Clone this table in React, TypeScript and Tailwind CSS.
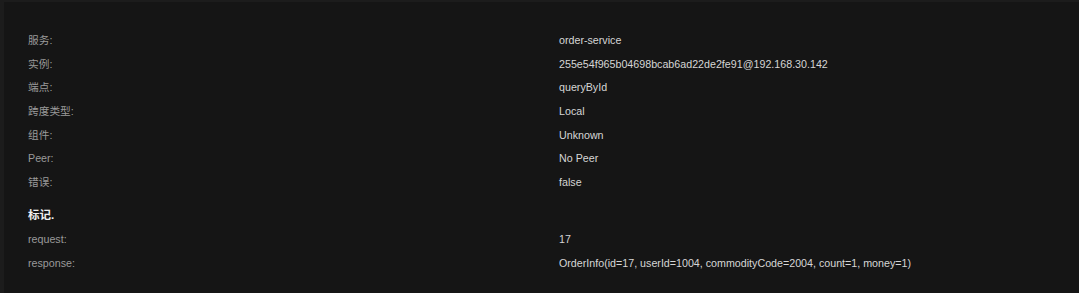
const rows = [
  { label: "服务:", value: "order-service" },
  { label: "实例:", value: "255e54f965b04698bcab6ad22de2fe91@192.168.30.142" },
  { label: "端点:", value: "queryById" },
  { label: "跨度类型:", value: "Local" },
  { label: "组件:", value: "Unknown" },
  { label: "Peer:", value: "No Peer" },
  { label: "错误:", value: "false" },
]

const tags = [
  { label: "request:", value: "17" },
  { label: "response:", value: "OrderInfo(id=17, userId=1004, commodityCode=2004, count=1, money=1)" },
]

const Row = ({ label, value }: { label: string; value: string }) => (
  <div className="flex items-center h-[23.7px]">
    <div className="w-[531px] shrink-0 text-[#9a9a9a]">{label}</div>
    <div className="text-[#d6d6d6] whitespace-nowrap">{value}</div>
  </div>
)

export default function App() {
  return (
    <div
      className="w-[1079px] h-[293px] bg-[#1c1c1c] pl-[4px] pt-[2px] overflow-hidden"
      style={{ fontFamily: "'Liberation Sans', Arial, 'Noto Sans CJK SC', sans-serif" }}
    >
      <div className="h-full bg-[#151515] pl-[24px] pt-[26px] text-[10.7px]">
        {rows.map((r) => (
          <Row key={r.label} label={r.label} value={r.value} />
        ))}

        <div className="flex items-center h-[23.7px] mt-[10px] text-[#f0f0f0] font-bold text-[11.5px]">
          标记.
        </div>

        {tags.map((r) => (
          <Row key={r.label} label={r.label} value={r.value} />
        ))}
      </div>
    </div>
  )
}
